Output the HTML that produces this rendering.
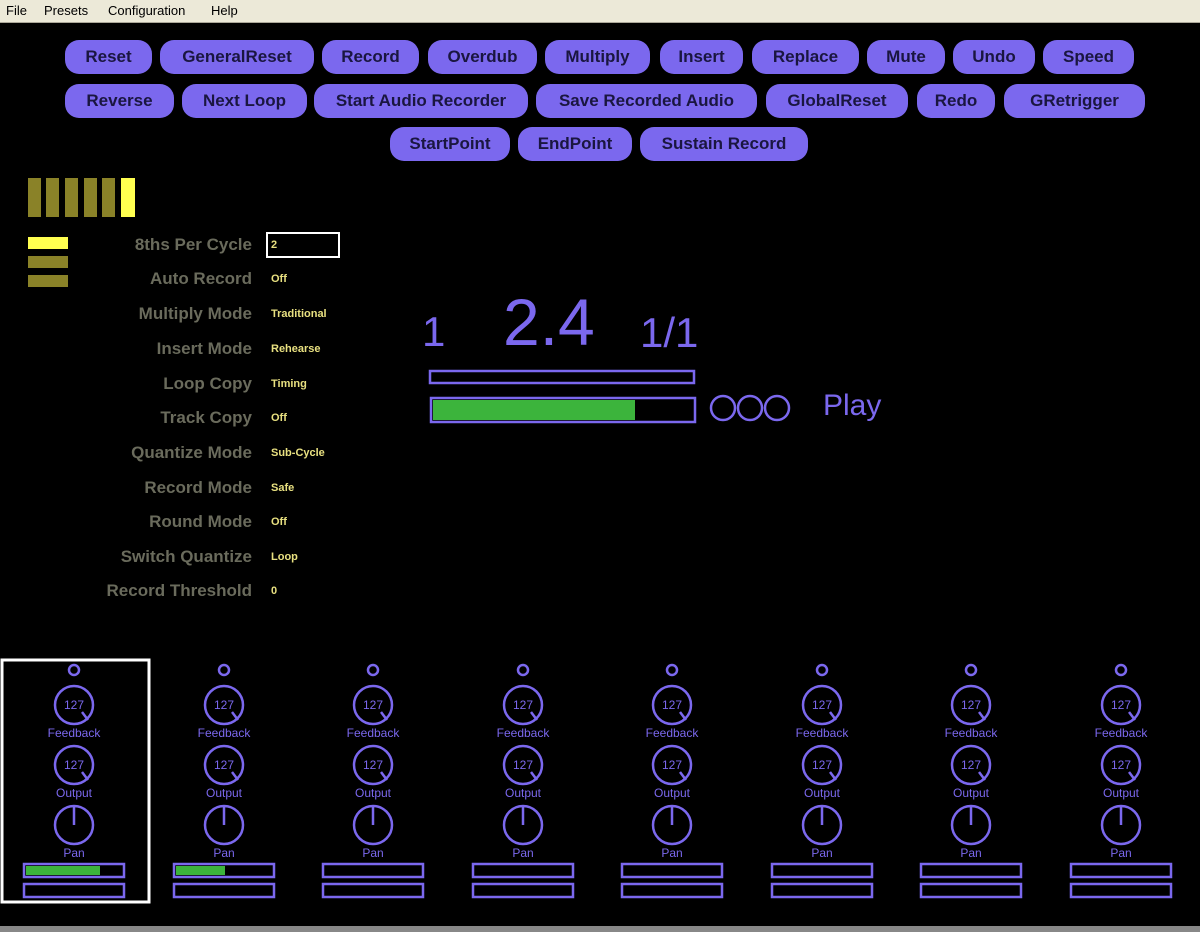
<!DOCTYPE html>
<html><head><meta charset="utf-8"><style>
body{margin:0;width:1200px;height:932px;background:#000;position:relative;overflow:hidden;font-family:"Liberation Sans",sans-serif}
.menu{position:absolute;left:0;top:0;width:1200px;height:22px;background:#ece9d8;border-bottom:1px solid #aca899;font-size:13px;color:#000}
.menu span{position:absolute;top:3px}
.b{position:absolute;height:34px;background:#7b68ee;border-radius:14px;color:#1a1640;font-weight:bold;font-size:17px;line-height:34px;text-align:center}
.y{position:absolute;background:#8a8228}
.lab{position:absolute;right:948px;color:#6a6b5c;font-weight:bold;font-size:17px;white-space:nowrap}
.val{position:absolute;left:271px;color:#e8e080;font-weight:bold;font-size:11px}
</style></head><body>
<div class="menu"><span style="left:6px">File</span><span style="left:44px">Presets</span><span style="left:108px">Configuration</span><span style="left:211px">Help</span></div>

<div class="b" style="left:65px;top:40px;width:87px">Reset</div>
<div class="b" style="left:160px;top:40px;width:154px">GeneralReset</div>
<div class="b" style="left:322px;top:40px;width:97px">Record</div>
<div class="b" style="left:428px;top:40px;width:109px">Overdub</div>
<div class="b" style="left:545px;top:40px;width:105px">Multiply</div>
<div class="b" style="left:660px;top:40px;width:83px">Insert</div>
<div class="b" style="left:752px;top:40px;width:107px">Replace</div>
<div class="b" style="left:867px;top:40px;width:78px">Mute</div>
<div class="b" style="left:953px;top:40px;width:82px">Undo</div>
<div class="b" style="left:1043px;top:40px;width:91px">Speed</div>

<div class="b" style="left:65px;top:84px;width:109px">Reverse</div>
<div class="b" style="left:182px;top:84px;width:125px">Next Loop</div>
<div class="b" style="left:314px;top:84px;width:214px">Start Audio Recorder</div>
<div class="b" style="left:536px;top:84px;width:221px">Save Recorded Audio</div>
<div class="b" style="left:766px;top:84px;width:142px">GlobalReset</div>
<div class="b" style="left:917px;top:84px;width:78px">Redo</div>
<div class="b" style="left:1004px;top:84px;width:141px">GRetrigger</div>

<div class="b" style="left:390px;top:127px;width:120px">StartPoint</div>
<div class="b" style="left:518px;top:127px;width:114px">EndPoint</div>
<div class="b" style="left:640px;top:127px;width:168px">Sustain Record</div>

<div class="y" style="left:28px;top:178px;width:13px;height:39px"></div>
<div class="y" style="left:46px;top:178px;width:13px;height:39px"></div>
<div class="y" style="left:65px;top:178px;width:13px;height:39px"></div>
<div class="y" style="left:84px;top:178px;width:13px;height:39px"></div>
<div class="y" style="left:102px;top:178px;width:13px;height:39px"></div>
<div class="y" style="left:121px;top:178px;width:14px;height:39px;background:#ffff50"></div>
<div class="y" style="left:28px;top:237px;width:40px;height:12px;background:#ffff50"></div>
<div class="y" style="left:28px;top:256px;width:40px;height:12px"></div>
<div class="y" style="left:28px;top:275px;width:40px;height:12px"></div>

<div class="lab" style="top:235px">8ths Per Cycle</div>
<div style="position:absolute;left:266px;top:232px;width:70px;height:22px;border:2px solid #fff;color:#e8e080;font-weight:bold;font-size:11px;line-height:22px;text-indent:3px">2</div>
<div class="lab" style="top:269px">Auto Record</div><div class="val" style="top:273px">Off</div>
<div class="lab" style="top:304px">Multiply Mode</div><div class="val" style="top:308px">Traditional</div>
<div class="lab" style="top:339px">Insert Mode</div><div class="val" style="top:343px">Rehearse</div>
<div class="lab" style="top:374px">Loop Copy</div><div class="val" style="top:378px">Timing</div>
<div class="lab" style="top:408px">Track Copy</div><div class="val" style="top:412px">Off</div>
<div class="lab" style="top:443px">Quantize Mode</div><div class="val" style="top:447px">Sub-Cycle</div>
<div class="lab" style="top:478px">Record Mode</div><div class="val" style="top:482px">Safe</div>
<div class="lab" style="top:512px">Round Mode</div><div class="val" style="top:516px">Off</div>
<div class="lab" style="top:547px">Switch Quantize</div><div class="val" style="top:551px">Loop</div>
<div class="lab" style="top:581px">Record Threshold</div><div class="val" style="top:585px">0</div>

<svg style="position:absolute;left:0;top:0" width="1200" height="932">
<g fill="#7b68ee" font-family="Liberation Sans,sans-serif">
<text x="422" y="346" font-size="42">1</text>
<text x="503" y="345" font-size="66">2.4</text>
<text x="640" y="347" font-size="42">1/1</text>
<text x="823" y="415" font-size="30">Play</text>
</g>
<g fill="none" stroke="#7b68ee" stroke-width="2.5">
<rect x="430" y="371" width="264" height="12"/>
<rect x="431" y="398" width="264" height="24"/>
<circle cx="723" cy="408" r="12"/><circle cx="750" cy="408" r="12"/><circle cx="777" cy="408" r="12"/>
</g>
<rect x="433" y="400" width="202" height="20" fill="#3cb43c"/>
<rect x="2" y="660" width="147" height="242" fill="none" stroke="#fff" stroke-width="3"/>
<rect x="0" y="926" width="1200" height="6" fill="#888"/>
</svg>

<svg style="position:absolute;left:0;top:650px" width="1200" height="270" font-family="Liberation Sans,sans-serif">
<defs>
<g id="ch" fill="none" stroke="#7b68ee" stroke-width="2.5">
<circle cx="0" cy="20" r="5"/>
<circle cx="0" cy="55" r="19"/><path d="M8 62 L14 70"/>
<circle cx="0" cy="115" r="19"/><path d="M8 122 L14 130"/>
<circle cx="0" cy="175" r="19"/><path d="M0 175 V156"/>
<rect x="-50" y="214" width="100" height="13"/>
<rect x="-50" y="234" width="100" height="13"/>
</g>
</defs>
<use href="#ch" x="74"/><use href="#ch" x="224"/><use href="#ch" x="373"/><use href="#ch" x="523"/><use href="#ch" x="672"/><use href="#ch" x="822"/><use href="#ch" x="971"/><use href="#ch" x="1121"/>
<rect x="26" y="216" width="74" height="9" fill="#3cb43c"/>
<rect x="176" y="216" width="49" height="9" fill="#3cb43c"/>
<g fill="#7b68ee" font-size="12" text-anchor="middle">
<g transform="translate(74 0)"><text y="59">127</text><text y="87">Feedback</text><text y="119">127</text><text y="147">Output</text><text y="207">Pan</text></g>
<g transform="translate(224 0)"><text y="59">127</text><text y="87">Feedback</text><text y="119">127</text><text y="147">Output</text><text y="207">Pan</text></g>
<g transform="translate(373 0)"><text y="59">127</text><text y="87">Feedback</text><text y="119">127</text><text y="147">Output</text><text y="207">Pan</text></g>
<g transform="translate(523 0)"><text y="59">127</text><text y="87">Feedback</text><text y="119">127</text><text y="147">Output</text><text y="207">Pan</text></g>
<g transform="translate(672 0)"><text y="59">127</text><text y="87">Feedback</text><text y="119">127</text><text y="147">Output</text><text y="207">Pan</text></g>
<g transform="translate(822 0)"><text y="59">127</text><text y="87">Feedback</text><text y="119">127</text><text y="147">Output</text><text y="207">Pan</text></g>
<g transform="translate(971 0)"><text y="59">127</text><text y="87">Feedback</text><text y="119">127</text><text y="147">Output</text><text y="207">Pan</text></g>
<g transform="translate(1121 0)"><text y="59">127</text><text y="87">Feedback</text><text y="119">127</text><text y="147">Output</text><text y="207">Pan</text></g>
</g>
</svg>
</body></html>
